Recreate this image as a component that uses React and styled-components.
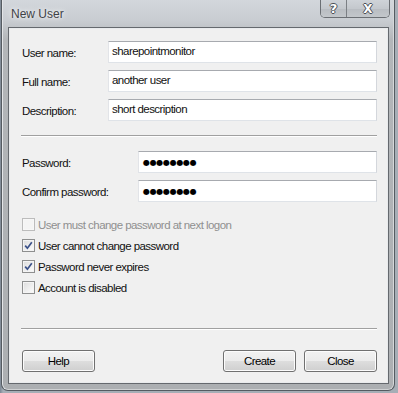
import React from "react";
import styled, { createGlobalStyle } from "styled-components";

const Global = createGlobalStyle`
  html, body { margin: 0; padding: 0; }
  body { background: #8f98a1; width: 398px; height: 393px; overflow: hidden; }
`;

const UI_FONT = `"Liberation Sans", Arial, sans-serif`;

const Desktop = styled.div`
  width: 398px;
  height: 393px;
  padding: 0 0 0 1px;
  box-sizing: border-box;
  background: linear-gradient(90deg, #7c8794 0, #a6aeb6 3px);
`;

const Window = styled.div`
  width: 394px;
  height: 391px;
  box-sizing: border-box;
  border: 1px solid #555b61;
  border-top: none;
  border-radius: 0 0 7px 7px;
  background: linear-gradient(180deg, #d3d7dc 0, #c9cdd2 20px, #b3b6b9 40px, #acafb2 100%);
  display: flex;
  flex-direction: column;
  padding: 0 5px 6px 6px;
  box-shadow: inset 1px 0 0 #e3e5e8, inset -1px 0 0 #d6d8da, inset 0 -1px 0 #cfd1d3;
`;

const TitleBar = styled.div`
  height: 27px;
  display: flex;
  align-items: flex-start;
  justify-content: space-between;
`;

const Title = styled.div`
  font-family: "Liberation Sans", Arial, sans-serif;
  font-size: 12px;
  color: #3f4246;
  padding: 7px 0 0 3px;
  text-shadow: 0 0 6px #f4f6f8, 0 0 3px #eef0f2;
`;

const CaptionGroup = styled.div`
  display: flex;
  height: 17px;
  margin-right: -1px;
  border: 1px solid #6b6f74;
  border-top: none;
  border-radius: 0 0 5px 5px;
  overflow: hidden;
  box-shadow: inset 0 -1px 0 #e6e8ea;
`;

const CaptionButton = styled.div`
  width: ${(p) => p.$w}px;
  height: 100%;
  display: flex;
  align-items: center;
  justify-content: center;
  background: linear-gradient(180deg, #cfd3d8 0, #c4c8cd 50%, #b8bcc1 51%, #c3c7cb 100%);
  & + & { border-left: 1px solid #7b7f84; }
  font-family: "DejaVu Sans", sans-serif;
  font-weight: bold;
  font-size: ${(p) => p.$fs}px;
  color: #ffffff;
  text-shadow: 1px 0 0 #4a4e54, -1px 0 0 #4a4e54, 0 1px 0 #4a4e54, 0 -1px 0 #4a4e54;
  line-height: 1;
`;

const Client = styled.div`
  flex: 1;
  background: #f0f0f0;
  border: 1px solid #65696e;
  box-shadow: 0 0 0 1px #e9ebed inset;
  display: flex;
  flex-direction: column;
  padding: 13px 11px 11px 13px;
  font-family: ${UI_FONT};
  font-size: 11.5px;
  letter-spacing: -0.55px;
  color: #111;
`;

const FieldGroup = styled.div`
  display: flex;
  flex-direction: column;
  gap: 7px;
`;

const FieldRow = styled.div`
  display: grid;
  grid-template-columns: ${(p) => p.$label}px 1fr;
  align-items: center;
  height: 22px;
`;

const Label = styled.label`
  padding-top: 1px;
`;

const TextBox = styled.div`
  height: 22px;
  box-sizing: border-box;
  background: #fff;
  border: 1px solid #dfe3e8;
  border-top-color: #a7aaaf;
  border-left-color: #e2e4e8;
  border-right-color: #d4d7dc;
  padding: 3px 3px 0 3px;
  white-space: nowrap;
  overflow: hidden;
`;

const Dots = styled.span`
  font-family: "DejaVu Sans", sans-serif;
  font-size: 8px;
  letter-spacing: -0.3px;
  line-height: 16px;
  color: #000;
  padding-left: 1px;
`;

const Separator = styled.div`
  height: 1px;
  background: #a0a0a0;
  border-bottom: 1px solid #ffffff;
  margin: ${(p) => p.$m};
  margin-left: -1px;
`;

const CheckList = styled.div`
  display: flex;
  flex-direction: column;
  gap: 8px;
  margin-top: 16px;
`;

const CheckRow = styled.div`
  display: flex;
  align-items: center;
  height: 13px;
  gap: 3px;
  color: ${(p) => (p.$disabled ? "#8f8f8f" : "#111")};
`;

const Box = styled.div`
  width: 13px;
  height: 13px;
  box-sizing: border-box;
  border: 1px solid ${(p) => (p.$disabled ? "#bcbcbc" : "#8e8f8f")};
  background: ${(p) =>
    p.$disabled
      ? "#f4f4f4"
      : "linear-gradient(135deg, #dcdcdc 0, #f0f0f0 60%, #fdfdfd 100%)"};
  box-shadow: inset 0 0 0 1px ${(p) => (p.$disabled ? "#f7f7f7" : "#f4f4f4")};
  display: flex;
  align-items: center;
  justify-content: center;
  flex: none;
`;

const ButtonBar = styled.div`
  display: flex;
  justify-content: space-between;
  margin-top: 20px;
`;

const ButtonGroup = styled.div`
  display: flex;
  gap: 8px;
`;

const Button = styled.button`
  width: 73px;
  height: 22px;
  box-sizing: border-box;
  border: 1px solid #707070;
  border-radius: 3px;
  background: linear-gradient(180deg, #f2f2f2 0, #ebebeb 50%, #dddddd 51%, #cfcfcf 100%);
  box-shadow: inset 0 0 0 1px #fcfcfc;
  font-family: ${UI_FONT};
  font-size: 11.5px;
  letter-spacing: -0.55px;
  color: #000;
  padding: 0;
  cursor: default;
`;

const fields = [
  { label: "User name:", value: "sharepointmonitor" },
  { label: "Full name:", value: "another user" },
  { label: "Description:", value: "short description" },
];

const checks = [
  { text: "User must change password at next logon", checked: false, disabled: true },
  { text: "User cannot change password", checked: true },
  { text: "Password never expires", checked: true },
  { text: "Account is disabled", checked: false },
];

function Check({ checked, disabled }) {
  return (
    <Box $disabled={disabled}>
      {checked && (
        <svg width="9" height="9" viewBox="0 0 9 9">
          <path d="M1.2 4.6 L3.4 7.2 L7.8 1.2" fill="none" stroke="#3b5189" strokeWidth="1.7" />
        </svg>
      )}
    </Box>
  );
}

export default function App() {
  return (
    <>
      <Global />
      <Desktop>
        <Window>
          <TitleBar>
            <Title>New User</Title>
            <CaptionGroup>
              <CaptionButton $w={25} $fs={13}>?</CaptionButton>
              <CaptionButton $w={42} $fs={12}>X</CaptionButton>
            </CaptionGroup>
          </TitleBar>
          <Client>
            <FieldGroup>
              {fields.map((f) => (
                <FieldRow key={f.label} $label={86}>
                  <Label>{f.label}</Label>
                  <TextBox>{f.value}</TextBox>
                </FieldRow>
              ))}
            </FieldGroup>
            <Separator $m="14px 0 14px 0" />
            <FieldGroup>
              {["Password:", "Confirm password:"].map((l) => (
                <FieldRow key={l} $label={116}>
                  <Label>{l}</Label>
                  <TextBox>
                    <Dots>●●●●●●●●</Dots>
                  </TextBox>
                </FieldRow>
              ))}
            </FieldGroup>
            <CheckList>
              {checks.map((c) => (
                <CheckRow key={c.text} $disabled={c.disabled}>
                  <Check checked={c.checked} disabled={c.disabled} />
                  <span>{c.text}</span>
                </CheckRow>
              ))}
            </CheckList>
            <Separator $m="auto 0 0 0" />
            <ButtonBar>
              <Button>Help</Button>
              <ButtonGroup>
                <Button>Create</Button>
                <Button>Close</Button>
              </ButtonGroup>
            </ButtonBar>
          </Client>
        </Window>
      </Desktop>
    </>
  );
}
